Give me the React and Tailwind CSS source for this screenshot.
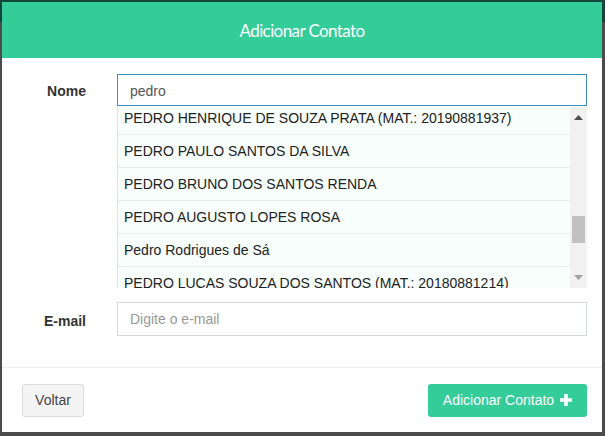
import { useState } from "react";

const nomes = [
  "PEDRO HENRIQUE DE SOUZA PRATA (MAT.: 20190881937)",
  "PEDRO PAULO SANTOS DA SILVA",
  "PEDRO BRUNO DOS SANTOS RENDA",
  "PEDRO AUGUSTO LOPES ROSA",
  "Pedro Rodrigues de Sá",
  "PEDRO LUCAS SOUZA DOS SANTOS (MAT.: 20180881214)",
];

const PlusIcon = () => (
  <svg width="12" height="12" viewBox="0 0 12 12" className="ml-[6px]">
    <path d="M6 0v12M0 6h12" stroke="white" strokeWidth="3.5" />
  </svg>
);

const App = () => {
  const [busca, setBusca] = useState("pedro");

  return (
    <div
      className="relative w-[605px] h-[436px] overflow-hidden bg-[#4b4b4b]"
      style={{ fontFamily: '"Liberation Sans", Arial, sans-serif' }}
    >
      <div className="h-[22px] bg-[#10473a]" />

      <div className="absolute left-[2px] top-[2px] w-[600px] h-[430px] bg-white flex flex-col">
        <div className="h-[56px] bg-[#34cc99] flex items-center justify-center">
          <h3
            className="text-white text-[17px] tracking-[-0.6px] pt-[1px]"
            style={{ fontFamily: 'Lato, "Noto Sans", sans-serif' }}
          >
            Adicionar Contato
          </h3>
        </div>

        <div className="pt-[16px] pr-[15px] flex flex-col">
          <div className="flex">
            <label className="w-[84px] pt-[7px] text-right font-bold text-[14px] text-[#333]">
              Nome
            </label>
            <div className="ml-[31px] flex-1 flex flex-col">
              <input
                value={busca}
                onChange={(e) => setBusca(e.target.value)}
                className="h-[32px] border border-[#3c8dbc] px-[12px] pt-[1px] text-[14px] text-[#555] outline-none"
              />
              <div className="mt-[1px] h-[181px] flex border-l border-[#e3e3e3] overflow-hidden">
                <ul className="flex-1 -mt-[5px]">
                  {nomes.map((n) => (
                    <li
                      key={n}
                      className="h-[33px] border-b border-[#e6ecea] bg-[#f7fefc] pl-[6px] flex items-center text-[14px] text-[#222] whitespace-nowrap"
                    >
                      {n}
                    </li>
                  ))}
                </ul>
                <div className="w-[17px] bg-[#f1f1f1] flex flex-col items-center">
                  <svg width="9" height="5" viewBox="0 0 9 5" className="mt-[8px]">
                    <path d="M0 5L4.5 0L9 5Z" fill="#505050" />
                  </svg>
                  <div className="mt-[96px] w-[13px] h-[27px] bg-[#c1c1c1]" />
                  <svg width="9" height="5" viewBox="0 0 9 5" className="mt-[32px]">
                    <path d="M0 0L4.5 5L9 0Z" fill="#a3a3a3" />
                  </svg>
                </div>
              </div>
            </div>
          </div>

          <div className="flex mt-[14px]">
            <label className="w-[84px] pt-[9px] text-right font-bold text-[14px] text-[#333]">
              E-mail
            </label>
            <input
              placeholder="Digite o e-mail"
              className="ml-[31px] flex-1 h-[34px] border border-[#d2d6de] px-[12px] text-[14px] text-[#555] placeholder:text-[#999] outline-none"
            />
          </div>
        </div>

        <div className="mt-auto border-t border-[#f0f0f0] h-[65px] px-[20px] pr-[15px] flex items-center justify-between">
          <button className="h-[33px] w-[62px] bg-[#f4f4f4] border border-[#dddddd] rounded-[3px] text-[14px] text-[#444]">
            Voltar
          </button>
          <button className="h-[33px] w-[159px] bg-[#34cc99] rounded-[3px] text-[14px] text-white flex items-center justify-center">
            Adicionar Contato
            <PlusIcon />
          </button>
        </div>
      </div>
    </div>
  );
};

export default App;
